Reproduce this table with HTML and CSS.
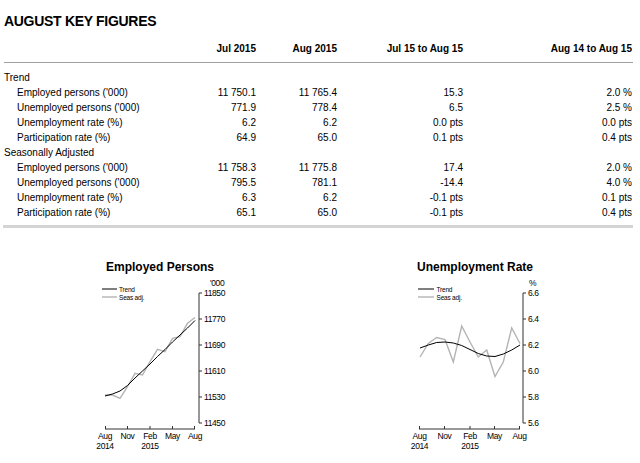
FILE: index.html
```html
<!DOCTYPE html>
<html>
<head>
<meta charset="utf-8">
<link rel="stylesheet" href="styles.css">
</head>
<body>
<div class="page">
  <h1 class="title">AUGUST KEY FIGURES</h1>
  <div class="table">
    <div class="row head"><span></span><span>Jul 2015</span><span>Aug 2015</span><span>Jul 15 to Aug 15</span><span>Aug 14 to Aug 15</span></div>
    <div class="tbody">
      <div class="row"><span class="grp">Trend</span></div>
      <div class="row"><span class="lbl">Employed persons ('000)</span><span>11 750.1</span><span>11 765.4</span><span>15.3</span><span>2.0 %</span></div>
      <div class="row"><span class="lbl">Unemployed persons ('000)</span><span>771.9</span><span>778.4</span><span>6.5</span><span>2.5 %</span></div>
      <div class="row"><span class="lbl">Unemployment rate (%)</span><span>6.2</span><span>6.2</span><span>0.0 pts</span><span>0.0 pts</span></div>
      <div class="row"><span class="lbl">Participation rate (%)</span><span>64.9</span><span>65.0</span><span>0.1 pts</span><span>0.4 pts</span></div>
      <div class="row"><span class="grp">Seasonally Adjusted</span></div>
      <div class="row"><span class="lbl">Employed persons ('000)</span><span>11 758.3</span><span>11 775.8</span><span>17.4</span><span>2.0 %</span></div>
      <div class="row"><span class="lbl">Unemployed persons ('000)</span><span>795.5</span><span>781.1</span><span>-14.4</span><span>4.0 %</span></div>
      <div class="row"><span class="lbl">Unemployment rate (%)</span><span>6.3</span><span>6.2</span><span>-0.1 pts</span><span>0.1 pts</span></div>
      <div class="row"><span class="lbl">Participation rate (%)</span><span>65.1</span><span>65.0</span><span>-0.1 pts</span><span>0.4 pts</span></div>
    </div>
  </div>
  <div class="rule"></div>
  <div class="charts">
    <div class="chart chart-emp">
      <div class="chart-title">Employed Persons</div>
      <svg class="plot" width="140" height="174" viewBox="90 276 140 174">
        <line class="leg-trend" x1="102" y1="289" x2="117" y2="289"/>
        <line class="leg-seas" x1="102" y1="297" x2="117" y2="297"/>
        <text class="leg" x="119" y="291.5">Trend</text>
        <text class="leg" x="119" y="299.5">Seas adj.</text>
        <line class="axis" x1="199" y1="293" x2="199" y2="423"/>
        <path class="axis" d="M199 293h3M199 319h3M199 345h3M199 371h3M199 397h3M199 423h3"/>
        <text class="tick" x="210" y="285.5">'000</text>
        <text class="tick" x="204" y="296">11850</text>
        <text class="tick" x="204" y="322">11770</text>
        <text class="tick" x="204" y="348">11690</text>
        <text class="tick" x="204" y="374">11610</text>
        <text class="tick" x="204" y="400">11530</text>
        <text class="tick" x="204" y="426">11450</text>
        <line class="axis" x1="105" y1="429" x2="195" y2="429"/>
        <path class="axis" d="M105.5 429v-3M127.5 429v-3M150 429v-3M172.5 429v-3M194.5 429v-3"/>
        <text class="tick mid" x="105" y="438.5">Aug</text>
        <text class="tick mid" x="105" y="448.5">2014</text>
        <text class="tick mid" x="127.5" y="438.5">Nov</text>
        <text class="tick mid" x="150" y="438.5">Feb</text>
        <text class="tick mid" x="150" y="448.5">2015</text>
        <text class="tick mid" x="172.5" y="438.5">May</text>
        <text class="tick mid" x="195" y="438.5">Aug</text>
        <polyline class="seas" points="105,395 112.5,395 120,398.3 127.5,386.7 135,373.3 142.5,375 150,361.7 157.5,349.3 165,351.7 172.5,338.3 180,336.7 187.5,323.3 195,317.5"/>
        <polyline class="trend" points="105,396 112.5,394 120,391 127.5,385.5 135,378 142.5,371 150,364 157.5,356.5 165,349.5 172.5,342 180,335 187.5,328 195,320.5"/>
      </svg>
    </div>
    <div class="chart chart-unemp">
      <div class="chart-title">Unemployment Rate</div>
      <svg class="plot" width="140" height="174" viewBox="405 276 140 174">
        <line class="leg-trend" x1="418" y1="289" x2="434" y2="289"/>
        <line class="leg-seas" x1="418" y1="297" x2="434" y2="297"/>
        <text class="leg" x="436.5" y="291.5">Trend</text>
        <text class="leg" x="436.5" y="299.5">Seas adj.</text>
        <line class="axis" x1="523" y1="293" x2="523" y2="423"/>
        <path class="axis" d="M523 293h3M523 319h3M523 345h3M523 371h3M523 397h3M523 423h3"/>
        <text class="tick" x="529" y="285.5">%</text>
        <text class="tick" x="528" y="296">6.6</text>
        <text class="tick" x="528" y="322">6.4</text>
        <text class="tick" x="528" y="348">6.2</text>
        <text class="tick" x="528" y="374">6.0</text>
        <text class="tick" x="528" y="400">5.8</text>
        <text class="tick" x="528" y="426">5.6</text>
        <line class="axis" x1="419" y1="429" x2="520" y2="429"/>
        <path class="axis" d="M419.5 429v-3M444.5 429v-3M470 429v-3M494.5 429v-3M519.5 429v-3"/>
        <text class="tick mid" x="419.5" y="438.5">Aug</text>
        <text class="tick mid" x="419.5" y="448.5">2014</text>
        <text class="tick mid" x="444.5" y="438.5">Nov</text>
        <text class="tick mid" x="470" y="438.5">Feb</text>
        <text class="tick mid" x="470" y="448.5">2015</text>
        <text class="tick mid" x="494.5" y="438.5">May</text>
        <text class="tick mid" x="519.5" y="438.5">Aug</text>
        <polyline class="seas" points="420,357 428.3,343.5 436.7,337.5 445,339.5 453.3,362 461.7,326 470,342 478.3,357 486.7,350 495,376.5 503.3,362 511.7,328 520,343.5"/>
        <polyline class="trend" points="420,348 428.3,345 436.7,342.5 445,342 453.3,343 461.7,345.5 470,349.5 478.3,353.5 486.7,356 495,356.5 503.3,354 511.7,350 520,345"/>
      </svg>
    </div>
  </div>
</div>
</body>
</html>
```
FILE: styles.css
```css
html, body {
  margin: 0;
  padding: 0;
  background: #ffffff;
}
body {
  font-family: "Liberation Sans", Arial, sans-serif;
  color: #000;
}
.page {
  padding: 13px 0 0 4px;
  width: 629px;
}
.title {
  margin: 0;
  font-size: 14px;
  line-height: 16px;
  font-weight: bold;
  letter-spacing: -0.3px;
}
.table {
  margin-top: 12px;
  font-size: 10px;
}
.row {
  display: grid;
  grid-template-columns: 192px 60px 81px 126px 169px;
  height: 15px;
  line-height: 15px;
  white-space: nowrap;
}
.row span {
  text-align: right;
}
.row span:first-child {
  text-align: left;
}
.head {
  font-weight: bold;
  padding-bottom: 6px;
  border-bottom: 1px solid #a0a0a0;
}
.tbody {
  margin-top: 7px;
}
.lbl {
  padding-left: 13px;
}
.rule {
  margin: 5px 0 0 -1px;
  height: 3px;
  width: 630px;
  background: #d4d4d4;
}
.charts {
  display: flex;
  padding-top: 32px;
  margin-left: 86px;
  gap: 175px;
}
.chart {
  width: 140px;
  display: flex;
  flex-direction: column;
  align-items: center;
}
.chart-title {
  font-size: 12px;
  font-weight: bold;
  line-height: 14px;
  white-space: nowrap;
}
.plot {
  display: block;
  margin-top: 2px;
  overflow: visible;
}
.axis {
  stroke: #333;
  stroke-width: 1;
  fill: none;
}
.trend, .leg-trend {
  stroke: #000;
  stroke-width: 1;
  fill: none;
}
.seas, .leg-seas {
  stroke: #b4b4b4;
  stroke-width: 1.4;
  fill: none;
}
.leg {
  font-family: "Liberation Sans", Arial, sans-serif;
  font-size: 6.5px;
  letter-spacing: -0.2px;
  fill: #000;
}
.tick {
  font-family: "Liberation Sans", Arial, sans-serif;
  font-size: 8.5px;
  letter-spacing: -0.4px;
  fill: #000;
}
.mid {
  text-anchor: middle;
}
```
